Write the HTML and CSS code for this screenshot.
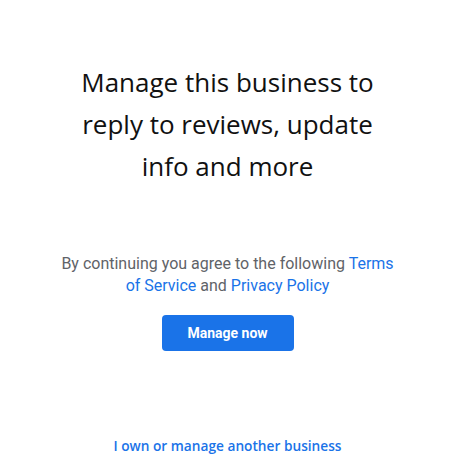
FILE: index.html
```html
<!DOCTYPE html>
<html>
<head>
<meta charset="utf-8">
<link rel="stylesheet" href="styles.css">
</head>
<body>
<main class="page">
  <h1 class="title">Manage this business to reply to reviews, update info and more</h1>
  <p class="terms">By continuing you agree to the following <a href="#">Terms of Service</a> and <a href="#">Privacy Policy</a></p>
  <button class="cta">Manage now</button>
  <a class="other" href="#">I own or manage another business</a>
</main>
</body>
</html>
```
FILE: styles.css
```css
html, body {
  margin: 0;
  padding: 0;
  background: #fff;
}
.page {
  width: 455px;
  height: 465px;
  display: flex;
  flex-direction: column;
  align-items: center;
  box-sizing: border-box;
  padding-top: 61px;
}
.title {
  margin: 0;
  width: 310px;
  font-family: "Open Sans", sans-serif;
  font-weight: 400;
  font-size: 26px;
  line-height: 42px;
  text-align: center;
  color: #111;
}
.terms {
  margin: 66px 0 0;
  width: 350px;
  font-family: Roboto, sans-serif;
  font-size: 16px;
  line-height: 22px;
  text-align: center;
  color: #5f6368;
}
.terms a {
  color: #1a73e8;
  text-decoration: none;
}
.cta {
  margin-top: 18px;
  width: 132px;
  height: 36px;
  border: none;
  border-radius: 4px;
  background: #1a73e8;
  color: #fff;
  font-family: Roboto, sans-serif;
  font-weight: 700;
  font-size: 14px;
}
.other {
  margin-top: 85px;
  font-family: "Open Sans", sans-serif;
  font-weight: 600;
  font-size: 13.7px;
  color: #1a73e8;
  text-decoration: none;
}
```
